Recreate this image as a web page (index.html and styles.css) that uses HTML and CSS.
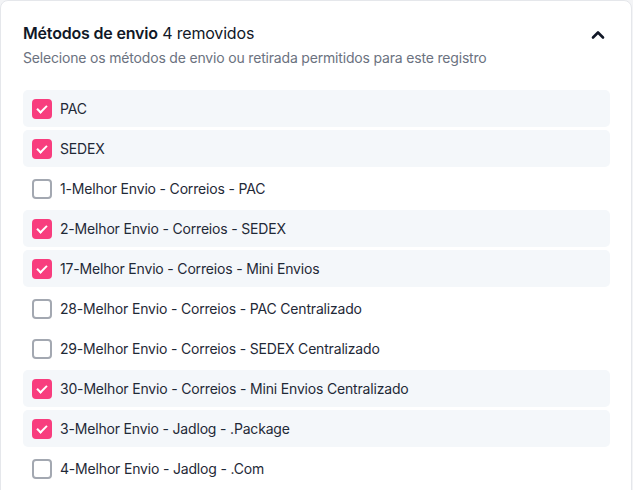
FILE: index.html
```html
<!DOCTYPE html>
<html lang="pt-BR">
<head>
<meta charset="utf-8">
<link rel="stylesheet" href="styles.css">
</head>
<body>
<section class="card">
  <header class="card-head">
    <div class="head-text">
      <h2 class="title"><strong>Métodos de envio</strong> 4 removidos</h2>
      <p class="subtitle">Selecione os métodos de envio ou retirada permitidos para este registro</p>
    </div>
    <button class="toggle" aria-label="Recolher">
      <svg width="24" height="24" viewBox="0 0 24 24" fill="none" stroke="currentColor" stroke-width="2.6" stroke-linecap="round" stroke-linejoin="round"><path d="M7 14.5 12 9.5l5 5"/></svg>
    </button>
  </header>
  <ul class="list">
    <li class="item on"><span class="box"></span><span class="label">PAC</span></li>
    <li class="item on"><span class="box"></span><span class="label">SEDEX</span></li>
    <li class="item"><span class="box"></span><span class="label">1-Melhor Envio - Correios - PAC</span></li>
    <li class="item on"><span class="box"></span><span class="label">2-Melhor Envio - Correios - SEDEX</span></li>
    <li class="item on"><span class="box"></span><span class="label">17-Melhor Envio - Correios - Mini Envios</span></li>
    <li class="item"><span class="box"></span><span class="label">28-Melhor Envio - Correios - PAC Centralizado</span></li>
    <li class="item"><span class="box"></span><span class="label">29-Melhor Envio - Correios - SEDEX Centralizado</span></li>
    <li class="item on"><span class="box"></span><span class="label">30-Melhor Envio - Correios - Mini Envios Centralizado</span></li>
    <li class="item on"><span class="box"></span><span class="label">3-Melhor Envio - Jadlog - .Package</span></li>
    <li class="item"><span class="box"></span><span class="label">4-Melhor Envio - Jadlog - .Com</span></li>
  </ul>
</section>
</body>
</html>
```
FILE: styles.css
```css
* { box-sizing: border-box; }
html, body { margin: 0; padding: 0; }
body {
  background: #f3f4f6;
  font-family: Inter, "Noto Sans", sans-serif;
  color: #1f2937;
  overflow: hidden;
  letter-spacing: -0.18px;
}
.card {
  width: 632px;
  height: 520px;
  background: #ffffff;
  border: 1px solid #e5e7eb;
  border-radius: 8px;
  padding: 21px 21px 0 22px;
}
.card-head {
  display: flex;
  justify-content: space-between;
  align-items: flex-start;
}
.title {
  margin: 0;
  font-size: 16px;
  line-height: 22px;
  font-weight: 400;
  color: #111827;
}
.title strong { font-weight: 600; }
.subtitle {
  margin: 4px 0 0;
  font-size: 14px;
  line-height: 20px;
  color: #6b7280;
}
.toggle {
  margin: 0;
  padding: 0;
  border: 0;
  background: none;
  color: #111827;
  width: 24px;
  height: 24px;
  margin-top: 1px;
  display: flex;
}
.list {
  list-style: none;
  margin: 22px 0 0;
  padding: 0;
  display: flex;
  flex-direction: column;
  gap: 3px;
}
.item {
  height: 37px;
  display: flex;
  align-items: center;
  gap: 8px;
  padding: 0 9px;
  border-radius: 5px;
  font-size: 14px;
  color: #1f2937;
}
.item.on { background: #f4f7fa; }
.box {
  width: 20px;
  height: 20px;
  border-radius: 4px;
  border: 2px solid #a3a8b1;
  background: #fff;
  flex: none;
  position: relative;
}
.item.on .box {
  background: #f83d7e;
  border-color: #f83d7e;
}
.item.on .box::after {
  content: "";
  position: absolute;
  width: 8px;
  height: 4px;
  border-left: 2px solid #fff;
  border-bottom: 2px solid #fff;
  transform: rotate(-45deg);
  transform-origin: center;
  top: 4px;
  left: 3px;
}
```
